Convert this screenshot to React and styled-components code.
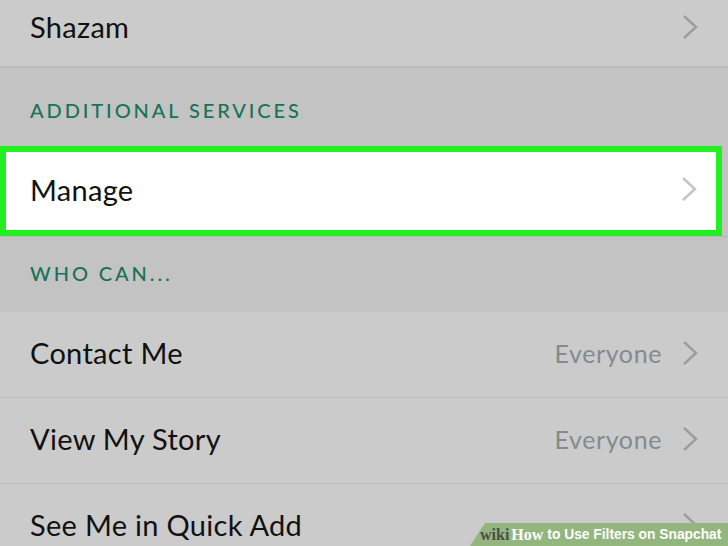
import React from "react"
import styled, { createGlobalStyle } from "styled-components"

const Global = createGlobalStyle`
  *, *::before, *::after {
    box-sizing: border-box;
  }
  html, body {
    margin: 0;
    padding: 0;
    background: #c3c3c3;
    overflow: hidden;
  }
`

const S = {
  Screen: styled.div`
    position: relative;
    width: 728px;
    height: 546px;
    overflow: hidden;
    background: #c3c3c3;
    font-family: Lato, "Noto Sans", sans-serif;
  `,
  List: styled.div`
    display: flex;
    flex-direction: column;
    margin-top: -19px;
  `,
  Row: styled.div`
    display: flex;
    align-items: center;
    height: ${(p) => (p.highlight ? "90px" : "86px")};
    padding: 0 30px 4px 30px;
    background: ${(p) => (p.highlight ? "#ffffff" : "#cbcbcb")};
    border-bottom: ${(p) => (p.highlight ? "none" : "1px solid #bcbcbc")};
    &:first-child {
      padding-top: 10px;
    }
    ${(p) =>
      p.highlight &&
      `
      border: 6px solid #22f022;
      margin-right: 6px;
      padding-left: 24px;
      padding-right: 19px;
    `}
  `,
  Label: styled.span`
    flex: 1;
    font-size: 29px;
    color: #111;
    letter-spacing: 0.3px;
  `,
  Value: styled.span`
    font-size: 25px;
    color: #858a8f;
    margin-right: 20px;
    letter-spacing: 0.6px;
  `,
  Chevron: styled.svg`
    width: 16px;
    height: 26px;
    flex: none;
    stroke: ${(p) => (p.light ? "#c4c4c4" : "#9d9d9d")};
  `,
  Section: styled.div`
    display: flex;
    align-items: center;
    height: ${(p) => p.h}px;
    padding: ${(p) => p.pt || 0}px 30px ${(p) => p.pb || 0}px 30px;
    border-top: 1px solid #b9b9b9;
    background: #c3c3c3;
    font-size: 20px;
    font-weight: 500;
    letter-spacing: 2.9px;
    color: #167356;
  `,
  Badge: styled.div`
    position: absolute;
    right: 0;
    bottom: 0;
    height: 23px;
    width: 258px;
    background: #93b67e;
    clip-path: polygon(15px 0, 100% 0, 100% 100%, 0 100%);
    display: flex;
    align-items: center;
    padding-left: 10px;
    white-space: nowrap;
    overflow: hidden;
  `,
  Wiki: styled.span`
    font-family: "Liberation Serif", serif;
    font-weight: bold;
    font-size: 16px;
    color: #4d4d4d;
  `,
  How: styled.span`
    font-family: "Liberation Serif", serif;
    font-weight: bold;
    font-size: 16px;
    color: #fff;
    margin-left: 2px;
  `,
  Title: styled.span`
    font-family: "Liberation Sans", Arial, sans-serif;
    font-weight: bold;
    font-size: 13.8px;
    color: #fff;
    margin-left: 4px;
  `,
}

const Chevron = ({ light }) => (
  <S.Chevron light={light} viewBox="0 0 16 26" fill="none" strokeWidth="2.4">
    <path d="M2 2 L14 13 L2 24" />
  </S.Chevron>
)

export default function App() {
  return (
    <S.Screen>
      <Global />
      <S.List>
        <S.Row>
          <S.Label>Shazam</S.Label>
          <Chevron />
        </S.Row>
        <S.Section h={79} pt={6}>ADDITIONAL SERVICES</S.Section>
        <S.Row highlight>
          <S.Label>Manage</S.Label>
          <Chevron light />
        </S.Row>
        <S.Section h={76} pb={4}>WHO CAN...</S.Section>
        {[
          ["Contact Me", "Everyone"],
          ["View My Story", "Everyone"],
          ["See Me in Quick Add", ""],
        ].map(([label, value]) => (
          <S.Row key={label}>
            <S.Label>{label}</S.Label>
            {value && <S.Value>{value}</S.Value>}
            <Chevron />
          </S.Row>
        ))}
      </S.List>
      <S.Badge>
        <S.Wiki>wiki</S.Wiki>
        <S.How>How</S.How>
        <S.Title>to Use Filters on Snapchat</S.Title>
      </S.Badge>
    </S.Screen>
  )
}
